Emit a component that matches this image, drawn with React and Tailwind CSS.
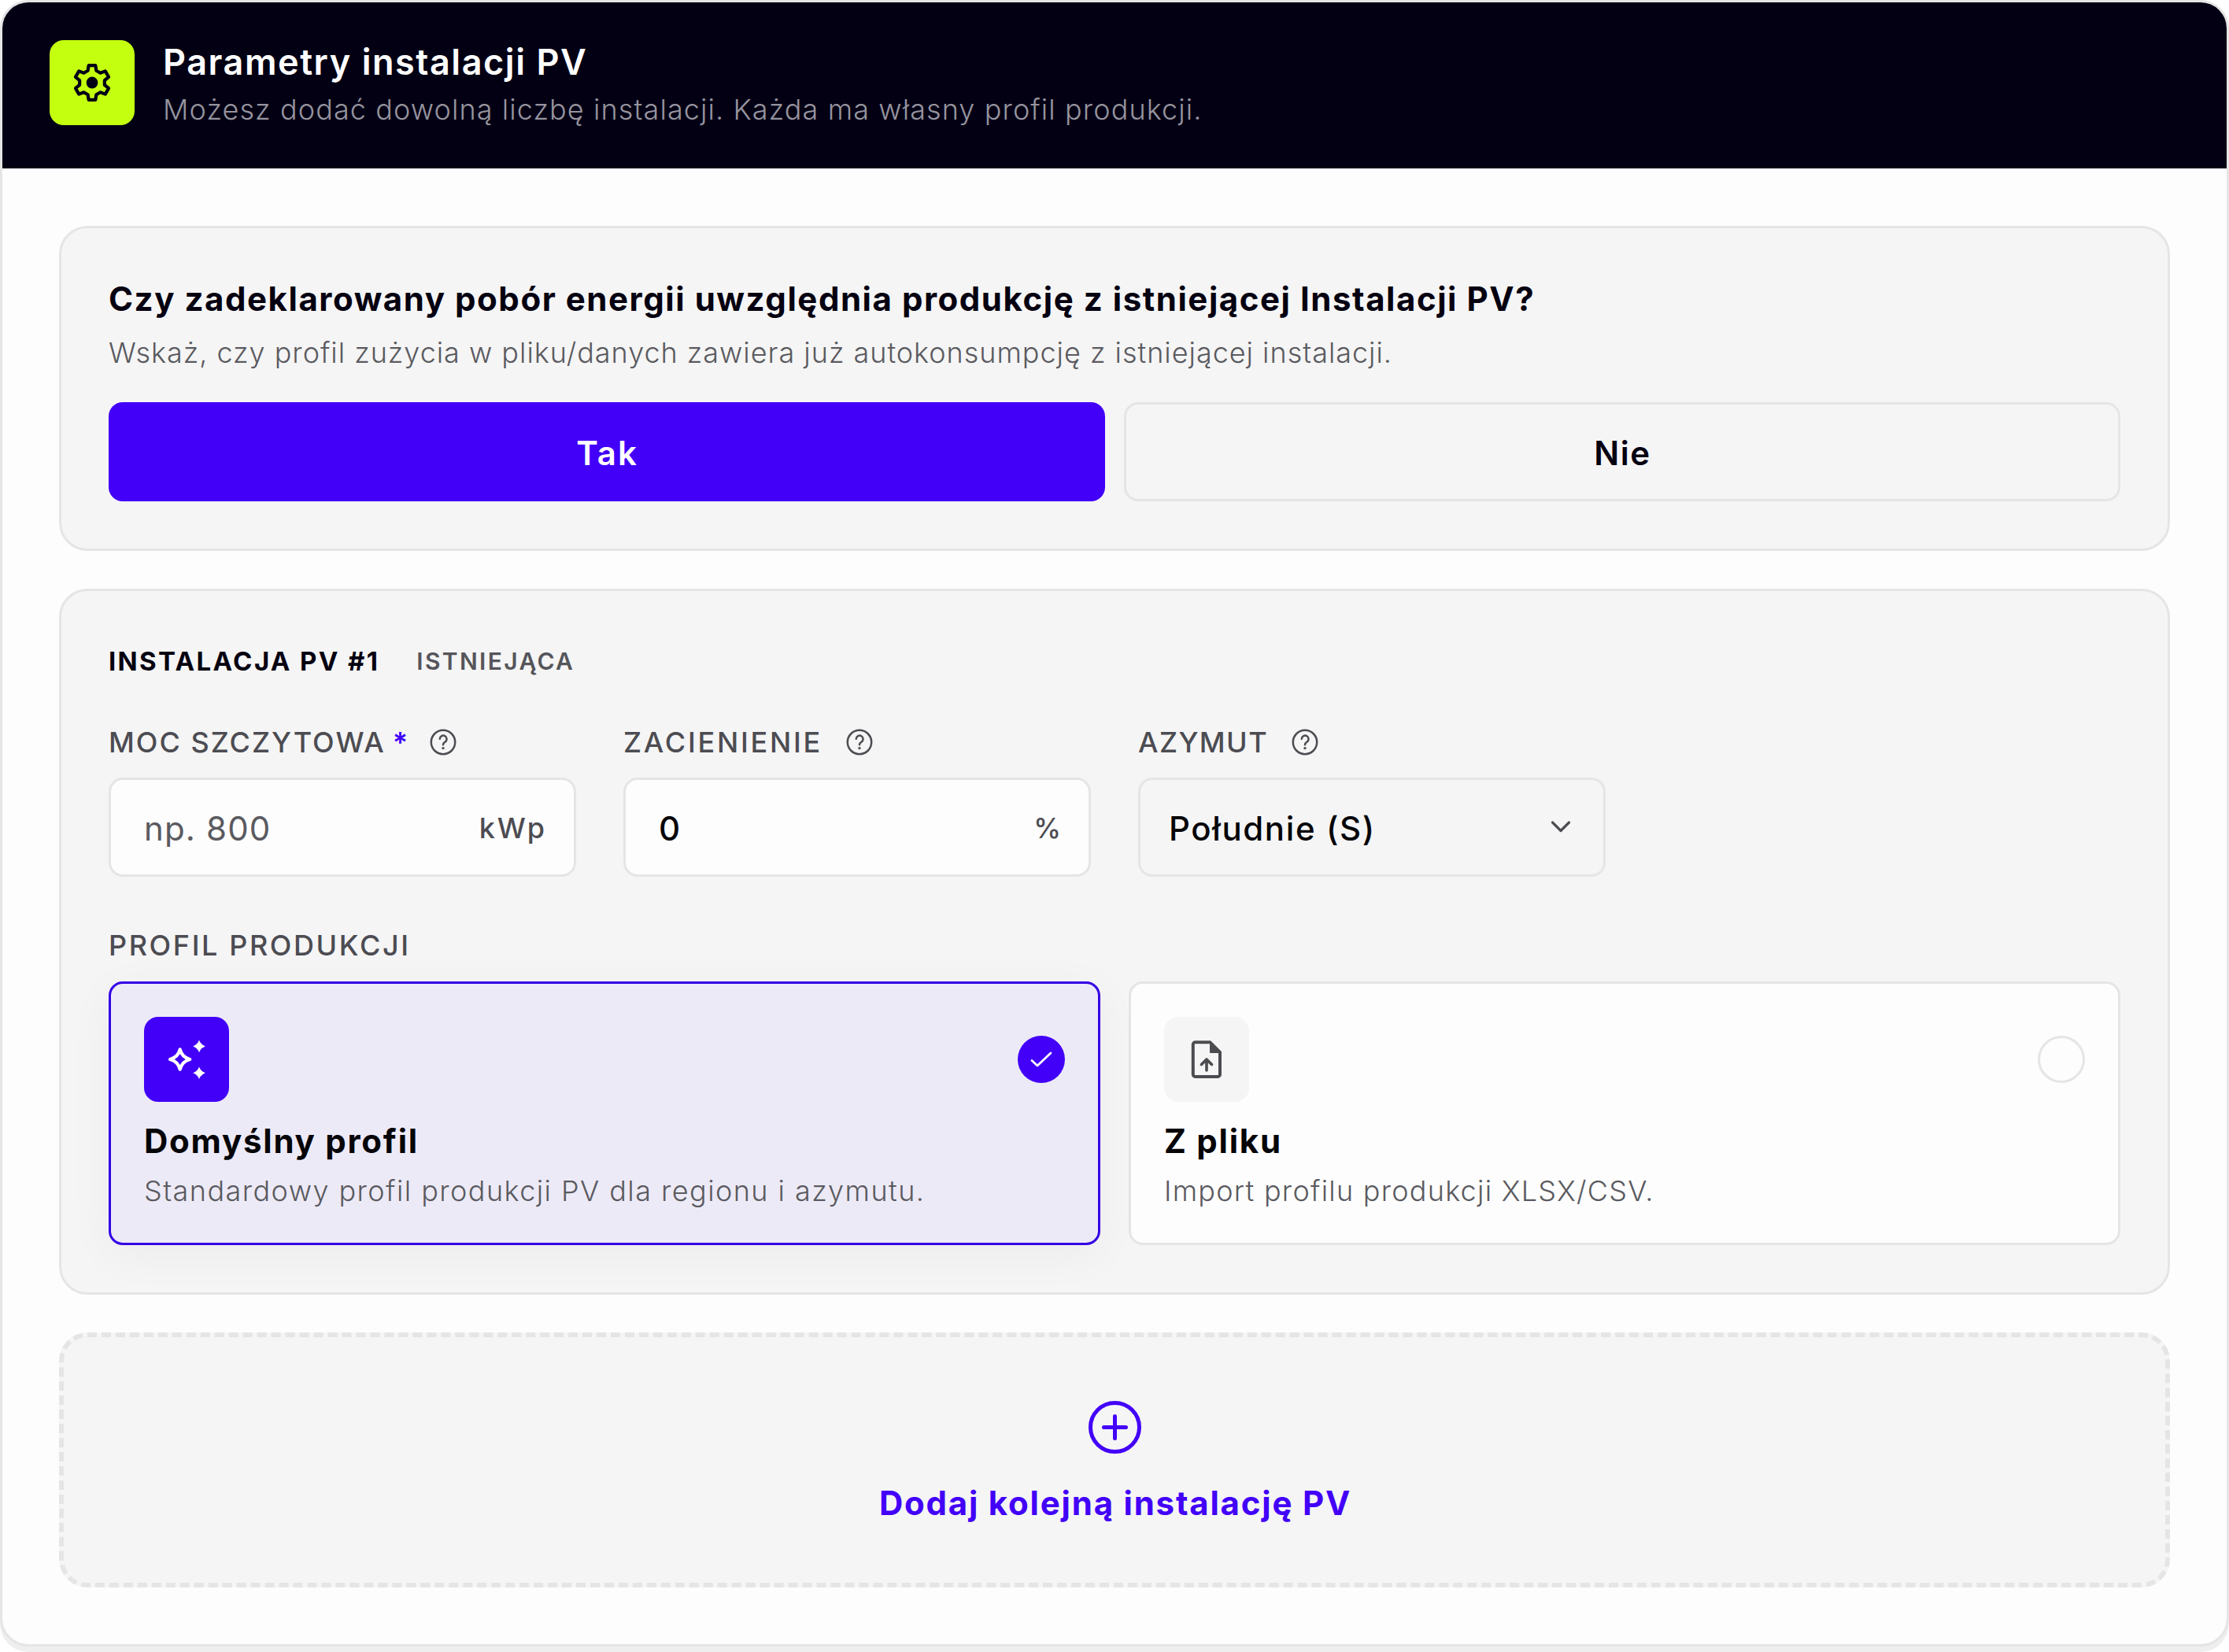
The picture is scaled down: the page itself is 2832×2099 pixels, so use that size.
const sparkle = (cx, cy, rx, ry, k) =>
  `M${cx} ${cy - ry}Q${cx + k} ${cy - k} ${cx + rx} ${cy}Q${cx + k} ${cy + k} ${cx} ${cy + ry}Q${cx - k} ${cy + k} ${cx - rx} ${cy}Q${cx - k} ${cy - k} ${cx} ${cy - ry}Z`;

// One tooth, repeated every 60 degrees around the hub.
const tooth = [
  [-5.4, -15.2],
  [-4.3, -21.8],
  [4.3, -21.8],
  [5.4, -15.2],
];

const gearPoints = [0, 60, 120, 180, 240, 300]
  .flatMap((deg) => {
    const c = Math.cos((deg * Math.PI) / 180);
    const s = Math.sin((deg * Math.PI) / 180);
    return tooth.map(([x, y]) => `${(x * c - y * s).toFixed(2)},${(x * s + y * c).toFixed(2)}`);
  })
  .join(" ");

function GearIcon() {
  return (
    <svg viewBox="-29 -29 58 58" className="size-[58px]">
      <polygon points={gearPoints} fill="none" stroke="currentColor" strokeWidth="4.2" strokeLinejoin="round" />
      <circle r="7.4" fill="currentColor" />
    </svg>
  );
}

function SparklesIcon() {
  return (
    <svg viewBox="0 0 58 58" className="size-[58px]" fill="currentColor">
      <path d={sparkle(20.7, 29, 12.6, 12.6, 2.6)} fill="none" stroke="currentColor" strokeWidth="4.2" strokeLinejoin="round" />
      <path d={sparkle(45, 12.4, 7.8, 7.8, 2)} />
      <path d={sparkle(45, 46.2, 7.8, 7.8, 2)} />
    </svg>
  );
}

function FileUploadIcon() {
  return (
    <svg viewBox="0 0 58 58" className="size-[58px]" fill="none" stroke="currentColor" strokeWidth="4" strokeLinecap="round" strokeLinejoin="round">
      <path d="M14.500 7.300H33.500L46 20V48.200A2.700 2.700 0 0 1 43.300 50.900H14.500A2.700 2.700 0 0 1 11.800 48.200V10A2.700 2.700 0 0 1 14.500 7.300Z" />
      <path d="M34 7.300V20H46Z" fill="currentColor" strokeWidth="2" />
      <path d="M29 43V29.500M22.500 35.500 29 29l6.500 6.500" strokeWidth="3.600" />
    </svg>
  );
}

function HelpIcon() {
  return (
    <svg viewBox="0 0 36 36" className="size-9 shrink-0 text-[#4c4c52]" fill="none" stroke="currentColor" strokeWidth="2.500" strokeLinecap="round" strokeLinejoin="round">
      <circle cx="18" cy="18" r="15.200" />
      <path d="M13.800 13.800a4.400 4.400 0 1 1 6.600 4c-1.600 1-2.400 1.800-2.400 3.400" />
      <circle cx="18" cy="25.600" r="1.700" fill="currentColor" stroke="none" />
    </svg>
  );
}

function Label({ children, required, help, tracking }) {
  return (
    <div className="flex h-[52px] items-center whitespace-nowrap text-[36px] font-medium leading-[52px] text-[#4c4c52]">
      <span className={tracking}>{children}</span>
      {required && <span className="ml-[9px] mr-[-2px] font-semibold text-[#4200f8]">*</span>}
      {help && <span className="ml-[29px] flex"><HelpIcon /></span>}
    </div>
  );
}

function Option({ selected, icon, title, text, textTracking }) {
  return (
    <div
      className={
        selected
          ? "h-[335px] rounded-[18px] border-[3px] border-[#3400e6] bg-[#edeaf7] px-[42px] pt-[42px] shadow-[0_12px_60px_rgba(0,0,0,0.045)]"
          : "z-10 h-[335px] rounded-[18px] border-[3px] border-[#e5e5e5] bg-[#fdfdfd] px-[42px] pt-[42px]"
      }
    >
      <div className="flex items-center justify-between">
        <div
          className={
            selected
              ? "flex size-[108px] items-center justify-center rounded-[18px] bg-[#4200f8] text-white"
              : "flex size-[108px] items-center justify-center rounded-[18px] bg-[#f5f5f5] text-[#4c4c50]"
          }
        >
          {icon}
        </div>
        {selected ? (
          <div className="flex size-[60px] items-center justify-center rounded-full bg-[#4200f8] text-white">
            <svg viewBox="0 0 30 24" className="h-6 w-[30px]" fill="none" stroke="currentColor" strokeWidth="2.800" strokeLinecap="round" strokeLinejoin="round">
              <path d="M3 13.500 10 20 27 4" />
            </svg>
          </div>
        ) : (
          <div className="size-[60px] rounded-full border-[3px] border-[#e5e5e5]" />
        )}
      </div>
      <div className="mt-[22px] whitespace-nowrap text-[42px] font-bold leading-[56px] tracking-[1.75px] text-[#050508]">{title}</div>
      <div className={`mt-[10px] whitespace-nowrap text-[36px] font-[350] leading-[50px] text-[#5a5a60] ${textTracking}`}>{text}</div>
    </div>
  );
}

export default function App() {
  return (
    <div className="h-[2099px] w-[2832px] bg-white font-['Inter',sans-serif] text-[#050010]">
      <div className="h-[2092px] w-full overflow-hidden rounded-[36px] border-[3px] border-[#e5e5e5] bg-[#fdfdfd] shadow-[0_7px_0_#eeeeee]">
        <header className="flex h-[211px] items-start gap-9 bg-[#030014] pl-[60px] pt-12">
          <div className="flex size-[108px] items-center justify-center rounded-[18px] bg-[#c5ff10] text-[#030014]">
            <GearIcon />
          </div>
          <div className="whitespace-nowrap">
            <h1 className="text-[45px] font-semibold leading-[56px] tracking-[1.55px] text-white">Parametry instalacji PV</h1>
            <p className="mt-[5px] text-[36px] font-[350] leading-[54px] tracking-[1.09px] text-[#96949e]">Możesz dodać dowolną liczbę instalacji. Każda ma własny profil produkcji.</p>
          </div>
        </header>

        <main className="flex flex-col gap-12 px-[72px] pt-[73px]">
          <section className="h-[413px] rounded-[36px] border-[3px] border-[#e5e5e5] bg-[#f5f5f5] p-[60px]">
            <h2 className="whitespace-nowrap text-[42px] font-bold leading-[60px] tracking-[1.54px]">Czy zadeklarowany pobór energii uwzględnia produkcję z istniejącej Instalacji PV?</h2>
            <p className="mt-[11px] whitespace-nowrap text-[36px] font-[350] leading-[54px] tracking-[0.97px] text-[#5a5a60]">Wskaż, czy profil zużycia w pliku/danych zawiera już autokonsumpcję z istniejącej instalacji.</p>
            <div className="mt-9 grid grid-cols-2 gap-6">
              <button className="h-[126px] rounded-[18px] bg-[#4200f8] pl-px pt-[2px] text-[42px] font-semibold tracking-[2px] text-white">Tak</button>
              <button className="h-[126px] rounded-[18px] border-[3px] border-[#e5e5e5] pl-px pt-[2px] text-[42px] font-semibold tracking-[1.6px]">Nie</button>
            </div>
          </section>

          <section className="h-[897px] rounded-[36px] border-[3px] border-[#e5e5e5] bg-[#f5f5f5] p-[60px]">
            <div className="flex h-[58px] items-center gap-[47px] whitespace-nowrap pt-px">
              <span className="text-[33px] font-bold tracking-[2.35px]">INSTALACJA PV #1</span>
              <span className="text-[30px] font-semibold tracking-[2.35px] text-[#55555b]">ISTNIEJĄCA</span>
            </div>
            <div className="mt-12 grid grid-cols-4 gap-[60px]">
              <div>
                <Label required help tracking="tracking-[2px]">MOC SZCZYTOWA</Label>
                <div className="mt-[19px] flex h-[126px] items-center justify-between rounded-[18px] border-[3px] border-[#e5e5e5] bg-[#fdfdfd] pl-[42px] pr-[34px] pt-[2px]">
                  <span className="text-[42px] tracking-[1.15px] text-[#5a5a60]">np. 800</span>
                  <span className="text-[36px] font-[550] tracking-[3px] text-[#4c4c52]">kWp</span>
                </div>
              </div>
              <div>
                <Label help tracking="tracking-[2.75px]">ZACIENIENIE</Label>
                <div className="mt-[19px] flex h-[126px] items-center justify-between rounded-[18px] border-[3px] border-[#e5e5e5] bg-[#fdfdfd] pl-[42px] pr-[35px] pt-[2px]">
                  <span className="text-[42px] font-medium text-[#050508]">0</span>
                  <span className="text-[35px] font-medium text-[#4c4c52]">%</span>
                </div>
              </div>
              <div>
                <Label help tracking="tracking-[1.4px]">AZYMUT</Label>
                <div className="mt-[19px] flex h-[126px] items-center justify-between rounded-[18px] border-[3px] border-[#e5e5e5] pl-9 pr-[39px]">
                  <span className="pt-[2px] text-[42px] font-medium tracking-[1.6px] text-[#050508]">Południe (S)</span>
                  <svg viewBox="0 0 30 24" className="h-6 w-[30px] text-[#4c4c52]" fill="none" stroke="currentColor" strokeWidth="3.200" strokeLinecap="round" strokeLinejoin="round">
                    <path d="M4.500 6 15 16.500 25.500 6" />
                  </svg>
                </div>
              </div>
            </div>
            <div className="mt-[61px]">
              <Label tracking="tracking-[2.6px]">PROFIL PRODUKCJI</Label>
            </div>
            <div className="mt-5 grid grid-cols-2 gap-9">
              <Option selected icon={<SparklesIcon />} title="Domyślny profil" text="Standardowy profil produkcji PV dla regionu i azymutu." textTracking="tracking-[1.43px]" />
              <Option icon={<FileUploadIcon />} title="Z pliku" text="Import profilu produkcji XLSX/CSV." textTracking="tracking-[1.24px]" />
            </div>
          </section>

          <section className="flex h-[324px] flex-col items-center rounded-[36px] border-[6px] border-dashed border-[#e5e5e5] bg-[#f5f5f5] pt-[81px] text-[#4200f8]">
            <svg viewBox="0 0 67 67" className="size-[67px]" fill="none" stroke="currentColor" strokeWidth="5" strokeLinecap="round">
              <circle cx="33.500" cy="33.500" r="31" />
              <path d="M33.500 19.500v28M19.500 33.500h28" />
            </svg>
            <span className="mt-[35px] whitespace-nowrap pl-[2px] text-[42px] font-bold leading-[56px] tracking-[1.78px]">Dodaj kolejną instalację PV</span>
          </section>
        </main>
      </div>
    </div>
  );
}
